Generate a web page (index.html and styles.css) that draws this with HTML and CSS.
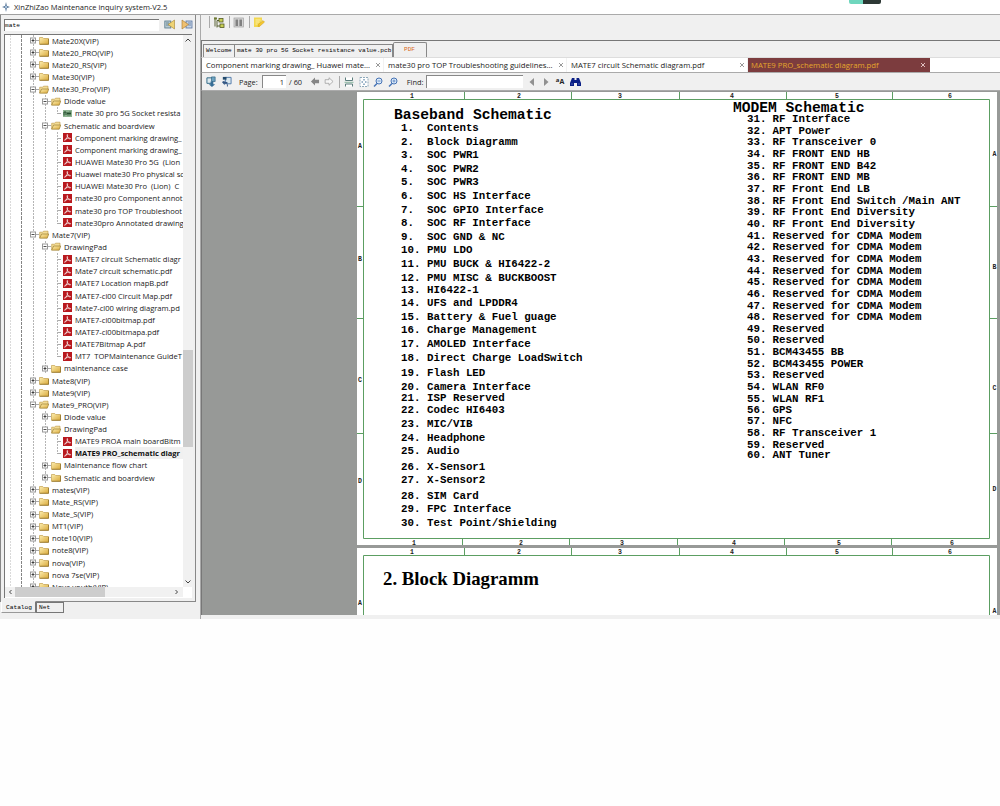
FILE: index.html
```html
<!DOCTYPE html>
<html lang="en">
<head>
<meta charset="utf-8">
<title>XinZhiZao Maintenance inquiry system-V2.5</title>
<link rel="stylesheet" href="styles.css">
</head>
<body>
<svg class="defs" width="0" height="0">
  <defs>
    <linearGradient id="gold" x1="0" y1="0" x2="1" y2="1"><stop offset="0" stop-color="#fdeeb0"/><stop offset="1" stop-color="#d9a93a"/></linearGradient>
    <symbol id="plus" viewBox="0 0 9 9"><path d="M6 4.500h3" stroke="#aaa"/><rect x=".5" y="2" width="5" height="5" fill="#fff" stroke="#999"/><path d="M1.500 4.500h3M3 3v3" stroke="#222" stroke-width=".8"/></symbol>
    <symbol id="minus" viewBox="0 0 9 9"><path d="M6 4.500h3" stroke="#aaa"/><rect x=".5" y="2" width="5" height="5" fill="#fff" stroke="#999"/><path d="M1.500 4.500h3" stroke="#222" stroke-width=".8"/></symbol>
    <symbol id="fold" viewBox="0 0 10 9"><path d="M.5 1.500h3.200l1 1h4.800v5.800h-9z" fill="url(#gold)" stroke="#b8923a" stroke-width=".6"/><path d="M.8 8.300h8.700V3" fill="none" stroke="#8a6a20" stroke-width=".7"/></symbol>
    <symbol id="open" viewBox="0 0 10 9"><path d="M.7 8V2.200h3l.8-1H9v3" fill="#f3dc94" stroke="#b8923a" stroke-width=".6"/><path d="M.6 8.200 2.600 4h7.200L8.200 8.200z" fill="url(#gold)" stroke="#8f7024" stroke-width=".6"/></symbol>
    <symbol id="pdf" viewBox="0 0 9 9"><rect width="9" height="9" fill="#b8191f"/><path d="M4.300 1.500c.7 0 .3 2-.6 3.700C3 6.500 2 7.700 1.600 7.300 1.200 6.600 3.500 5.300 5.500 5.200c1.600-.1 2.300.3 2 .7-.6.5-2.200-.7-3-2.200-.5-1-.6-2.200-.2-2.200z" fill="none" stroke="#fff" stroke-width=".7"/></symbol>
    <symbol id="pcb" viewBox="0 0 9 9"><rect y="1" width="9" height="7" fill="#8db391"/><path d="M1 6.500V3h2v3M5 3v3.500M7 2.500v4M4 4.500h4" stroke="#234d2c" fill="none"/></symbol>
  </defs>
</svg>
<div class="window">
  <header class="titlebar">
    <svg class="logo" viewBox="0 0 8 10"><path d="M4 0 4.800 4 8 5 4.800 6 4 10 3.200 6 0 5 3.200 4z" fill="#3c5f86"/><circle cx="4" cy="5" r="1.200" fill="#a9c4de"/></svg>
    <span>XinZhiZao Maintenance inquiry system-V2.5</span>
    <i class="progress"></i>
  </header>
  <div class="columns">
    <aside class="sidebar">
      <div class="panel">
        <div class="search">
          <div class="query">mate</div>
          <svg viewBox="0 0 12 11"><rect x=".8" y="2" width="6" height="7" fill="#b8c9cf" stroke="#55798c" stroke-width=".8"/><path d="M2 4h3M2 6h3" stroke="#55798c" stroke-width=".8"/><path d="M10.500 1v9L4 5.500z" fill="#eed374" stroke="#a58331" stroke-width=".6"/></svg>
          <svg viewBox="0 0 12 11"><rect x="5" y="2" width="6" height="7" fill="#c8d6e6" stroke="#5874a0" stroke-width=".8"/><path d="M7 4h3M7 6h3" stroke="#5874a0" stroke-width=".8"/><path d="M1 1v9L7.500 5.500z" fill="#f0c070" stroke="#a5762d" stroke-width=".6"/></svg>
        </div>
        <div class="treebox">
          <ul class="tree">
            <li class="l1"><svg><use href="#plus"/></svg><svg class="ic"><use href="#fold"/></svg>Mate20X(VIP)</li>
            <li class="l1"><svg><use href="#plus"/></svg><svg class="ic"><use href="#fold"/></svg>Mate20_PRO(VIP)</li>
            <li class="l1"><svg><use href="#plus"/></svg><svg class="ic"><use href="#fold"/></svg>Mate20_RS(VIP)</li>
            <li class="l1"><svg><use href="#plus"/></svg><svg class="ic"><use href="#fold"/></svg>Mate30(VIP)</li>
            <li class="l1"><svg><use href="#minus"/></svg><svg class="ic"><use href="#open"/></svg>Mate30_Pro(VIP)</li>
            <li class="l2"><svg><use href="#minus"/></svg><svg class="ic"><use href="#open"/></svg>Diode value</li>
            <li class="l3 joined"><svg class="ic"><use href="#pcb"/></svg>mate 30 pro 5G Socket resista</li>
            <li class="l2"><svg><use href="#minus"/></svg><svg class="ic"><use href="#open"/></svg>Schematic and boardview</li>
            <li class="l3"><svg class="ic"><use href="#pdf"/></svg>Component marking drawing_</li>
            <li class="l3"><svg class="ic"><use href="#pdf"/></svg>Component marking drawing_</li>
            <li class="l3"><svg class="ic"><use href="#pdf"/></svg>HUAWEI Mate30 Pro 5G&nbsp; (Lion</li>
            <li class="l3"><svg class="ic"><use href="#pdf"/></svg>Huawei mate30 Pro physical sc</li>
            <li class="l3"><svg class="ic"><use href="#pdf"/></svg>HUAWEI Mate30 Pro&nbsp; (Lion)&nbsp; C</li>
            <li class="l3"><svg class="ic"><use href="#pdf"/></svg>mate30 pro Component annot</li>
            <li class="l3"><svg class="ic"><use href="#pdf"/></svg>mate30 pro TOP Troubleshoot</li>
            <li class="l3 end"><svg class="ic"><use href="#pdf"/></svg>mate30pro Annotated drawing</li>
            <li class="l1"><svg><use href="#minus"/></svg><svg class="ic"><use href="#open"/></svg>Mate7(VIP)</li>
            <li class="l2"><svg><use href="#minus"/></svg><svg class="ic"><use href="#open"/></svg>DrawingPad</li>
            <li class="l3"><svg class="ic"><use href="#pdf"/></svg>MATE7 circuit Schematic diagr</li>
            <li class="l3"><svg class="ic"><use href="#pdf"/></svg>Mate7 circuit schematic.pdf</li>
            <li class="l3"><svg class="ic"><use href="#pdf"/></svg>MATE7 Location mapB.pdf</li>
            <li class="l3"><svg class="ic"><use href="#pdf"/></svg>MATE7-cl00 Circuit Map.pdf</li>
            <li class="l3"><svg class="ic"><use href="#pdf"/></svg>Mate7-cl00 wiring diagram.pd</li>
            <li class="l3"><svg class="ic"><use href="#pdf"/></svg>MATE7-cl00bitmap.pdf</li>
            <li class="l3"><svg class="ic"><use href="#pdf"/></svg>MATE7-cl00bitmapa.pdf</li>
            <li class="l3"><svg class="ic"><use href="#pdf"/></svg>MATE7Bitmap A.pdf</li>
            <li class="l3 end"><svg class="ic"><use href="#pdf"/></svg>MT7&nbsp; TOPMaintenance GuideT</li>
            <li class="l2"><svg><use href="#plus"/></svg><svg class="ic"><use href="#fold"/></svg>maintenance case</li>
            <li class="l1"><svg><use href="#plus"/></svg><svg class="ic"><use href="#fold"/></svg>Mate8(VIP)</li>
            <li class="l1"><svg><use href="#plus"/></svg><svg class="ic"><use href="#fold"/></svg>Mate9(VIP)</li>
            <li class="l1"><svg><use href="#minus"/></svg><svg class="ic"><use href="#open"/></svg>Mate9_PRO(VIP)</li>
            <li class="l2"><svg><use href="#plus"/></svg><svg class="ic"><use href="#fold"/></svg>Diode value</li>
            <li class="l2"><svg><use href="#minus"/></svg><svg class="ic"><use href="#open"/></svg>DrawingPad</li>
            <li class="l3"><svg class="ic"><use href="#pdf"/></svg>MATE9 PROA main boardBitm</li>
            <li class="l3 end"><svg class="ic"><use href="#pdf"/></svg><b>MATE9 PRO_schematic diagr</b></li>
            <li class="l2"><svg><use href="#plus"/></svg><svg class="ic"><use href="#fold"/></svg>Maintenance flow chart</li>
            <li class="l2"><svg><use href="#plus"/></svg><svg class="ic"><use href="#fold"/></svg>Schematic and boardview</li>
            <li class="l1"><svg><use href="#plus"/></svg><svg class="ic"><use href="#fold"/></svg>mates(VIP)</li>
            <li class="l1"><svg><use href="#plus"/></svg><svg class="ic"><use href="#fold"/></svg>Mate_RS(VIP)</li>
            <li class="l1"><svg><use href="#plus"/></svg><svg class="ic"><use href="#fold"/></svg>Mate_S(VIP)</li>
            <li class="l1"><svg><use href="#plus"/></svg><svg class="ic"><use href="#fold"/></svg>MT1(VIP)</li>
            <li class="l1"><svg><use href="#plus"/></svg><svg class="ic"><use href="#fold"/></svg>note10(VIP)</li>
            <li class="l1"><svg><use href="#plus"/></svg><svg class="ic"><use href="#fold"/></svg>note8(VIP)</li>
            <li class="l1"><svg><use href="#plus"/></svg><svg class="ic"><use href="#fold"/></svg>nova(VIP)</li>
            <li class="l1"><svg><use href="#plus"/></svg><svg class="ic"><use href="#fold"/></svg>nova 7se(VIP)</li>
            <li class="l1"><svg><use href="#plus"/></svg><svg class="ic"><use href="#fold"/></svg>Nova youth(VIP)</li>
          </ul>
          <div class="vscroll">
            <svg viewBox="0 0 10 10"><path d="M2.500 6.500 5 4l2.500 2.500"/></svg>
            <i></i>
            <svg viewBox="0 0 10 10"><path d="M2.500 3.500 5 6l2.500-2.500"/></svg>
          </div>
          <div class="hscroll">
            <svg viewBox="0 0 10 10"><path d="M6.500 3 4.500 5l2 2"/></svg>
            <i></i>
            <svg viewBox="0 0 10 10"><path d="M3.500 3l2 2-2 2"/></svg>
          </div>
        </div>
      </div>
      <div class="foot-tabs"><span class="on">Catalog</span><span>Net</span></div>
    </aside>
    <main class="main">
      <div class="toolbar">
        <i class="sep"></i>
        <svg viewBox="0 0 12 12"><path d="M2 1v9M4 4v7M4 4h3M4 9.500h3" stroke="#5b6336" fill="none"/><rect x="1" y="1" width="3" height="2" fill="#6e7b32"/><rect x="6" y="2" width="4" height="3.500" fill="#c8cf56" stroke="#535a25" stroke-width=".8"/><rect x="7" y="7.500" width="4" height="3.500" fill="#c8cf56" stroke="#535a25" stroke-width=".8"/></svg>
        <i class="sep"></i>
        <svg viewBox="0 0 12 12"><rect x="1" y="1.500" width="9.500" height="9" fill="#d5d5d5" stroke="#a0a0a0" stroke-width=".7"/><path d="M3.800 3v6.500M7.700 3v6.500" stroke="#808080" stroke-width="2.600"/></svg>
        <i class="sep"></i>
        <svg viewBox="0 0 12 12"><path d="M1 1h8v3l-2 3v3.500H1z" fill="#f3d84f"/><path d="M2.500 3.500h5M2.500 5.500h4M2.500 7.500h2" stroke="#fff6c4" stroke-width=".8"/><path d="M5 10 5.500 7.800 10 4l1.500 1.600L7 9.500z" fill="#f6c72b" stroke="#c79b24" stroke-width=".5"/></svg>
      </div>
      <nav class="doc-tabs"><span class="wel">Welcome</span><span class="val">mate 30 pro 5G Socket resistance value.pcb</span><span class="on">PDF</span></nav>
      <nav class="file-tabs">
        <span class="f1">Component marking drawing_ Huawei mate...<svg viewBox="0 0 6 6"><path d="M1 1l4 4M5 1 1 5"/></svg></span>
        <span class="f2">mate30 pro TOP Troubleshooting guidelines...<svg viewBox="0 0 6 6"><path d="M1 1l4 4M5 1 1 5"/></svg></span>
        <span class="f3">MATE7 circuit Schematic diagram.pdf<svg viewBox="0 0 6 6"><path d="M1 1l4 4M5 1 1 5"/></svg></span>
        <span class="f4">MATE9 PRO_schematic diagram.pdf<svg viewBox="0 0 6 6"><path d="M1 1l4 4M5 1 1 5"/></svg></span>
      </nav>
      <div class="pdfbar">
        <svg viewBox="0 0 12 12"><path d="M1 2h6v6H1z" fill="#dbe8ee" stroke="#286481"/><path d="M6 1h4v5H6z" fill="#6da2c0" stroke="#2c617f" stroke-width=".7"/><path d="M5 6h3v3h2L6.500 12 3 9h2z" fill="#376e96"/></svg>
        <svg class="second" viewBox="0 0 12 12"><path d="M5 1.500h6v7H5z" fill="#dbe8ee" stroke="#4d76a8"/><path d="M2 1h4v3H2z" fill="#234a6c"/><path d="M1 6.500 4 5v1.500h3v2H4V10z" fill="#345783"/><path d="M7 9v2.500" stroke="#345783"/></svg>
        <span class="page-label">Page:</span><div class="page-no">1</div><span class="total">/ 60</span>
        <svg class="arrow" viewBox="0 0 10 10"><path d="M.5 5 5 .5v2.500h4.500v4H5v2.500z" fill="#858585"/></svg>
        <svg class="arrow next" viewBox="0 0 10 10"><path d="M9.500 5 5 .8V3H.7v4H5v2.200z" fill="#f6f6f6" stroke="#999" stroke-width=".8"/></svg>
        <i class="sep"></i>
        <svg class="tool" viewBox="0 0 10 10"><path d="M1.500 .5v3h7V.5M1.500 9.500V7h7v2.500" fill="#fff" stroke="#5b7d7c"/><path d="M.5 5.300h9" stroke="#6fa88b" stroke-width=".8"/></svg>
        <svg class="tool" viewBox="0 0 10 10"><rect x="1" y=".5" width="8" height="9" fill="#fff" stroke="#7395ab" stroke-dasharray="2 1" stroke-width=".8"/><path d="M5 2v1.500M5 6.500V8M2.500 5h1.500M6 5h1.500" stroke="#356993"/></svg>
        <svg class="tool" viewBox="0 0 10 10"><circle cx="6" cy="4" r="3" fill="#dcebfa" stroke="#4572b4"/><path d="M4 6.500 1 9.500" stroke="#4572b4" stroke-width="1.400"/><path d="M4.500 4h3" stroke="#4572b4" stroke-width=".7"/></svg>
        <svg class="tool" viewBox="0 0 10 10"><circle cx="6" cy="4" r="3" fill="#dcebfa" stroke="#4572b4"/><path d="M4 6.500 1 9.500" stroke="#4572b4" stroke-width="1.400"/><path d="M4.500 4h3M6 2.500v3" stroke="#4572b4" stroke-width=".7"/></svg>
        <span class="find-label">Find:</span><div class="find"></div>
        <svg class="tri" viewBox="0 0 6 8"><path d="M5 0v8L.5 4z" fill="#919191"/></svg>
        <svg class="tri" viewBox="0 0 6 8"><path d="M1 0v8l4.500-4z" fill="#919191"/></svg>
        <span class="case"><span class="small">a</span>A</span>
        <svg class="bino" viewBox="0 0 11 10"><path d="M2 1h2.500v2h2V1H9l2 5v3H7V6H4v3H0V6z" fill="#0a1f85"/><path d="M1.500 7h1M8.500 7h1" stroke="#8fa3e0"/></svg>
      </div>
      <div class="viewer">
        <section class="sheet first">
          <svg class="frame" viewBox="357 92 640 453">
            <path class="line" d="M363.500 99.500H989.500V538.500H363.500zM464.500 92v7M571.500 92v7M679.500 92v7M786.500 92v7M892.500 92v7M462.500 538v7M569.500 538v7M677.500 538v7M784.500 538v7M891.500 538v7M357 206.500h6M357 318.500h6M357 433.500h6M989 206.500h8M989 318.500h8M989 433.500h8"/>
            <g class="mark"><text x="412" y="97.500">1</text><text x="519" y="97.500">2</text><text x="620" y="97.500">3</text><text x="732" y="97.500">4</text><text x="837" y="97.500">5</text><text x="950" y="97.500">6</text>
            <text x="414" y="544.500">1</text><text x="521" y="544.500">2</text><text x="622" y="544.500">3</text><text x="734" y="544.500">4</text><text x="839" y="544.500">5</text><text x="952" y="544.500">6</text>
            <text x="360" y="148">A</text><text x="360" y="261">B</text><text x="360" y="381.500">C</text><text x="360" y="482.500">D</text>
            <text x="994.500" y="156">A</text><text x="994.500" y="269">B</text><text x="994.500" y="389.500">C</text><text x="994.500" y="490.500">D</text></g>
          </svg>
          <div class="baseband">
            <h2>Baseband Schematic</h2>
            <ol>
              <li><b>1.</b>Contents</li><li><b>2.</b>Block Diagramm</li><li><b>3.</b>SOC PWR1</li><li><b>4.</b>SOC PWR2</li><li><b>5.</b>SOC PWR3</li><li><b>6.</b>SOC HS Interface</li><li><b>7.</b>SOC GPIO Interface</li><li><b>8.</b>SOC RF Interface</li><li><b>9.</b>SOC GND &amp; NC</li><li><b>10.</b>PMU LDO</li><li><b>11.</b>PMU BUCK &amp; HI6422-2</li><li><b>12.</b>PMU MISC &amp; BUCKBOOST</li><li class="tight"><b>13.</b>HI6422-1</li><li><b>14.</b>UFS and LPDDR4</li><li><b>15.</b>Battery &amp; Fuel guage</li><li><b>16.</b>Charge Management</li><li><b>17.</b>AMOLED Interface</li><li><b>18.</b>Direct Charge LoadSwitch</li><li class="loose"><b>19.</b>Flash LED</li><li><b>20.</b>Camera Interface</li><li class="tight"><b>21.</b>ISP Reserved</li><li class="tight"><b>22.</b>Codec HI6403</li><li><b>23.</b>MIC/VIB</li><li><b>24.</b>Headphone</li><li><b>25.</b>Audio</li><li class="loose"><b>26.</b>X-Sensor1</li><li><b>27.</b>X-Sensor2</li><li class="loose"><b>28.</b>SIM Card</li><li><b>29.</b>FPC Interface</li><li><b>30.</b>Test Point/Shielding</li>
            </ol>
          </div>
          <div class="modem">
            <h2>MODEM Schematic</h2>
            <ol>
              <li><b>31.</b>RF Interface</li><li><b>32.</b>APT Power</li><li><b>33.</b>RF Transceiver 0</li><li><b>34.</b>RF FRONT END HB</li><li><b>35.</b>RF FRONT END B42</li><li><b>36.</b>RF FRONT END MB</li><li><b>37.</b>RF Front End LB</li><li><b>38.</b>RF Front End Switch /Main ANT</li><li><b>39.</b>RF Front End Diversity</li><li><b>40.</b>RF Front End Diversity</li><li><b>41.</b>Reserved for CDMA Modem</li><li><b>42.</b>Reserved for CDMA Modem</li><li><b>43.</b>Reserved for CDMA Modem</li><li><b>44.</b>Reserved for CDMA Modem</li><li><b>45.</b>Reserved for CDMA Modem</li><li><b>46.</b>Reserved for CDMA Modem</li><li><b>47.</b>Reserved for CDMA Modem</li><li><b>48.</b>Reserved for CDMA Modem</li><li><b>49.</b>Reserved</li><li><b>50.</b>Reserved</li><li><b>51.</b>BCM43455 BB</li><li><b>52.</b>BCM43455 POWER</li><li><b>53.</b>Reserved</li><li><b>54.</b>WLAN RF0</li><li><b>55.</b>WLAN RF1</li><li><b>56.</b>GPS</li><li class="tight"><b>57.</b>NFC</li><li><b>58.</b>RF Transceiver 1</li><li><b>59.</b>Reserved</li><li class="tight"><b>60.</b>ANT Tuner</li>
            </ol>
          </div>
        </section>
        <section class="sheet second-page">
          <svg class="frame" viewBox="357 548 640 67">
            <path class="line" d="M363.500 616V555.500H989.500V616M464.500 548v7M571.500 548v7M679.500 548v7M786.500 548v7M892.500 548v7"/>
            <g class="mark"><text x="412" y="554">1</text><text x="519" y="554">2</text><text x="620" y="554">3</text><text x="732" y="554">4</text><text x="837" y="554">5</text><text x="950" y="554">6</text><text x="360" y="605">A</text><text x="994.500" y="612.500">A</text></g>
          </svg>
          <h1>2. Block Diagramm</h1>
        </section>
      </div>
    </main>
  </div>
</div>
</body>
</html>
```
FILE: styles.css
```css
* { box-sizing: border-box; }
body { margin: 0; background: #fefefe; color: #222; font: 7.6px/12px "Open Sans", "Noto Sans", sans-serif; }
svg { display: block; flex: none; }
ul, ol { list-style: none; margin: 0; padding: 0; }
h1, h2 { margin: 0; }
.defs { position: absolute; }
.window { width: 1000px; height: 619px; display: flex; flex-direction: column; background: #f0f0f0; }
.titlebar { height: 14px; background: #fff; display: flex; align-items: center; padding: 0 0 1px 2px; gap: 4px; font-size: 7.550px; position: relative; white-space: nowrap; }
.logo { width: 8px; height: 10px; }
.progress { position: absolute; left: 849px; top: 0; width: 32px; height: 4px; border-radius: 0 0 2px 2px; background: linear-gradient(90deg, #6fd6bd 43%, #2d3835 43%); }
.columns { flex: 1; display: flex; min-height: 0; }

/* Sidebar */
.sidebar { width: 200px; display: flex; flex-direction: column; border-top: 1px solid #a0a0a0; }
.panel { width: 196px; height: 587px; border: solid #888; border-width: 0 1px 1px; padding: 4px 2px 3px 3px; display: flex; flex-direction: column; }
.search { display: flex; height: 15px; gap: 5px; }
.query { width: 156px; height: 12px; background: #fff; border: solid #777; border-width: 1px 0 0 1px; color: #000; font: 6.200px/11px "Liberation Mono", monospace; }
.search svg { width: 12px; height: 11px; }
.treebox { flex: 1; display: grid; grid-template: 552px 10px / 178px 10px; border: solid #777; border-width: 1px 0 0 1px; background: #fff; width: 188px; min-height: 0; }
.tree { overflow: hidden; margin-top: -.5px; }
.tree li { height: 12.150px; display: flex; align-items: center; white-space: nowrap; overflow: hidden; width: 177.500px; background-repeat: no-repeat;
  --d: repeating-linear-gradient(#b5b5b5 0 2px, #fff0 2px 3px);
  --e: repeating-linear-gradient(#dadada 0 2px, #fff0 2px 3px);
  --dark: repeating-linear-gradient(#858585 0 3px, #fff0 3px 4px); }
.tree svg { width: 9px; height: 9px; }
.tree .ic { width: 10px; margin-right: 3px; }
.tree .l1 { padding-left: 25px; background-image: var(--e), var(--dark), var(--d); background-size: 1px 100%; background-position: 5px 0, 16px 0, 28px 0; }
.tree .l2 { padding-left: 37px; background-image: var(--e), var(--dark), var(--d), var(--d); background-size: 1px 100%; background-position: 5px 0, 16px 0, 28px 0, 40px 0; }
.tree .l3 { padding-left: 58px; letter-spacing: -.01px; background-image: var(--e), var(--dark), var(--d), var(--d), var(--d), linear-gradient(#aaa, #aaa); background-size: 1px 100%, 1px 100%, 1px 100%, 1px 100%, 1px 100%, 4px 1px; background-position: 5px 0, 16px 0, 28px 0, 40px 0, 52px 0, 52px 6px; }
.tree .end, .tree .joined { background-size: 1px 100%, 1px 100%, 1px 100%, 1px 100%, 1px 50%, 4px 1px; }
.tree .l3 .ic { width: 9px; }
.tree b { background: #f0f0f0; flex: 1; overflow: hidden; color: #111; font-size: 7.500px; }
.vscroll, .hscroll { background: #f1f1f1; display: flex; }
.vscroll { flex-direction: column; justify-content: space-between; }
.vscroll i { height: 97px; margin-top: 295px; margin-bottom: 120px; background: #cdcdcd; }
.hscroll { grid-column: 1 / 3; width: 178px; }
.hscroll i { width: 90px; background: #cdcdcd; margin-right: 67px; }
.vscroll svg, .hscroll svg { width: 10px; height: 10px; fill: none; stroke: #444; }
.foot-tabs { display: flex; height: 12px; padding-left: 1px; margin-top: -1px; color: #000; font: 6.200px/11px "Liberation Mono", monospace; }
.foot-tabs span { border: 1px solid #777; width: 28px; height: 11px; padding-left: 2px; line-height: 9px; margin-top: 1px; }
.foot-tabs .on { width: 35px; border-color: #f0f0f0 #777 #999 #fff; padding-left: 4px; line-height: 11px; margin-top: 0; height: 12px; background: #f0f0f0; }

/* Toolbars and tabs */
.main { width: 800px; display: flex; flex-direction: column; border: solid #aaa; border-width: 1px 0 0 1px; padding-bottom: 4px; }
.sep { width: 1px; height: 12px; background: #aaa; }
.toolbar { height: 26px; padding: 1px 0 0 8px; display: flex; gap: 3px; border-bottom: 1px solid #777; }
.toolbar svg { width: 12px; height: 13px; margin-right: 1px; }
.doc-tabs { height: 16px; display: flex; align-items: flex-end; padding-left: 1px; color: #000; font: 6.130px/12px "Liberation Mono", monospace; border-left: 1px solid #777; white-space: nowrap; }
.doc-tabs span { height: 13px; border: solid #888; border-width: 1px 1px 0; padding-left: 2px; }
.doc-tabs .wel { width: 32px; }
.doc-tabs .val { width: 158px; border-left: 0; }
.doc-tabs .on { width: 34px; height: 15px; color: #d9691a; padding-left: 10px; border-radius: 2px 2px 0 0; line-height: 13px; }
.file-tabs { height: 16px; background: #fff; display: flex; align-items: center; border-bottom: 1px solid #aaa; border-left: 1px solid #777; white-space: nowrap; border-top: 1px solid #ddd; font-size: 7.720px; }
.file-tabs span { display: flex; justify-content: space-between; align-items: center; height: 14px; padding: 0 2px 0 4px; border-right: 1px solid #f2f2f2; }
.file-tabs svg { width: 6px; height: 6px; stroke: #999; fill: none; }
.f1 { width: 182px; }
.f2 { width: 183px; }
.f3 { width: 181px; }
.file-tabs .f4 { width: 182px; padding: 0 4px 0 3px; background: #7c3c3e; color: #e5a72c; border: 0; }
.f4 svg { stroke: #e0c0c0; }
.pdfbar { height: 18px; display: flex; align-items: center; padding-left: 4px; border-bottom: 1px solid #aaa; border-left: 1px solid #777; white-space: nowrap; font-size: 7.400px; }
.pdfbar svg { width: 11px; height: 11px; }
.pdfbar .second { margin-left: 4px; }
.page-label { margin-left: 7px; width: 23px; }
.page-no, .find { height: 13px; background: #fff; border: solid #888; border-width: 1px 0 0 1px; }
.page-no { width: 24px; text-align: right; padding-right: 2px; }
.total { margin-left: 3px; width: 21px; }
.pdfbar .arrow { width: 10px; height: 9px; }
.pdfbar .next { margin-left: 4px; }
.pdfbar .sep { margin: 0 4px 0 5px; }
.pdfbar .tool { width: 10px; height: 10px; margin-right: 4.700px; }
.find-label { margin-left: 4px; width: 19px; }
.find { width: 97px; }
.pdfbar .tri { width: 6px; height: 8px; margin-left: 6px; }
.pdfbar .tri + .tri { margin-left: 8px; }
.case { margin-left: 7px; width: 14px; font-weight: bold; font-size: 7px; display: flex; align-items: center; }
.small { font-size: 6px; line-height: 8px; margin-bottom: 4px; }
.pdfbar .bino { height: 10px; }

/* Document area */
.viewer { flex: 1; min-height: 0; background: #979997; padding: 1px 0 0 155px; display: flex; flex-direction: column; gap: 3px; overflow: hidden; border-left: 1px solid #777; }
.sheet { width: 640px; background: #fff; position: relative; display: flex; color: #000; flex: none; }
.first { height: 453px; }
.second-page { height: 67px; }
.frame { position: absolute; inset: 0; width: 100%; height: 100%; }
.line { fill: none; stroke: #5c9e62; stroke-width: 1; }
.mark { font: bold 6.500px "Liberation Mono", monospace; text-anchor: middle; fill: #222; }
.sheet ol, .sheet h2 { font-family: "Liberation Mono", monospace; font-weight: bold; }
.sheet h2 { font-size: 14.620px; line-height: 16px; white-space: nowrap; }
.sheet ol { font-size: 10.800px; }
.sheet li { display: flex; white-space: nowrap; }
.baseband { width: 339px; padding: 15px 0 0 37px; }
.baseband ol { padding: 0 0 0 7px; margin-top: -1px; }
.baseband li { height: 13.620px; line-height: 13.620px; }
.baseband b { width: 26px; }
.baseband .tight { margin-top: -1.800px; }
.baseband .loose { margin-top: 1.900px; }
.modem { padding: 8px 0 0 37px; }
.modem ol { padding-left: 14px; margin-top: -2px; }
.modem li { height: 11.660px; line-height: 11.660px; }
.modem b { width: 25.500px; }
.modem .tight { margin-top: -.8px; }
.sheet h1 { font: bold 18.800px/22px "Liberation Serif", serif; padding: 20px 0 0 26px; white-space: nowrap; }
```
